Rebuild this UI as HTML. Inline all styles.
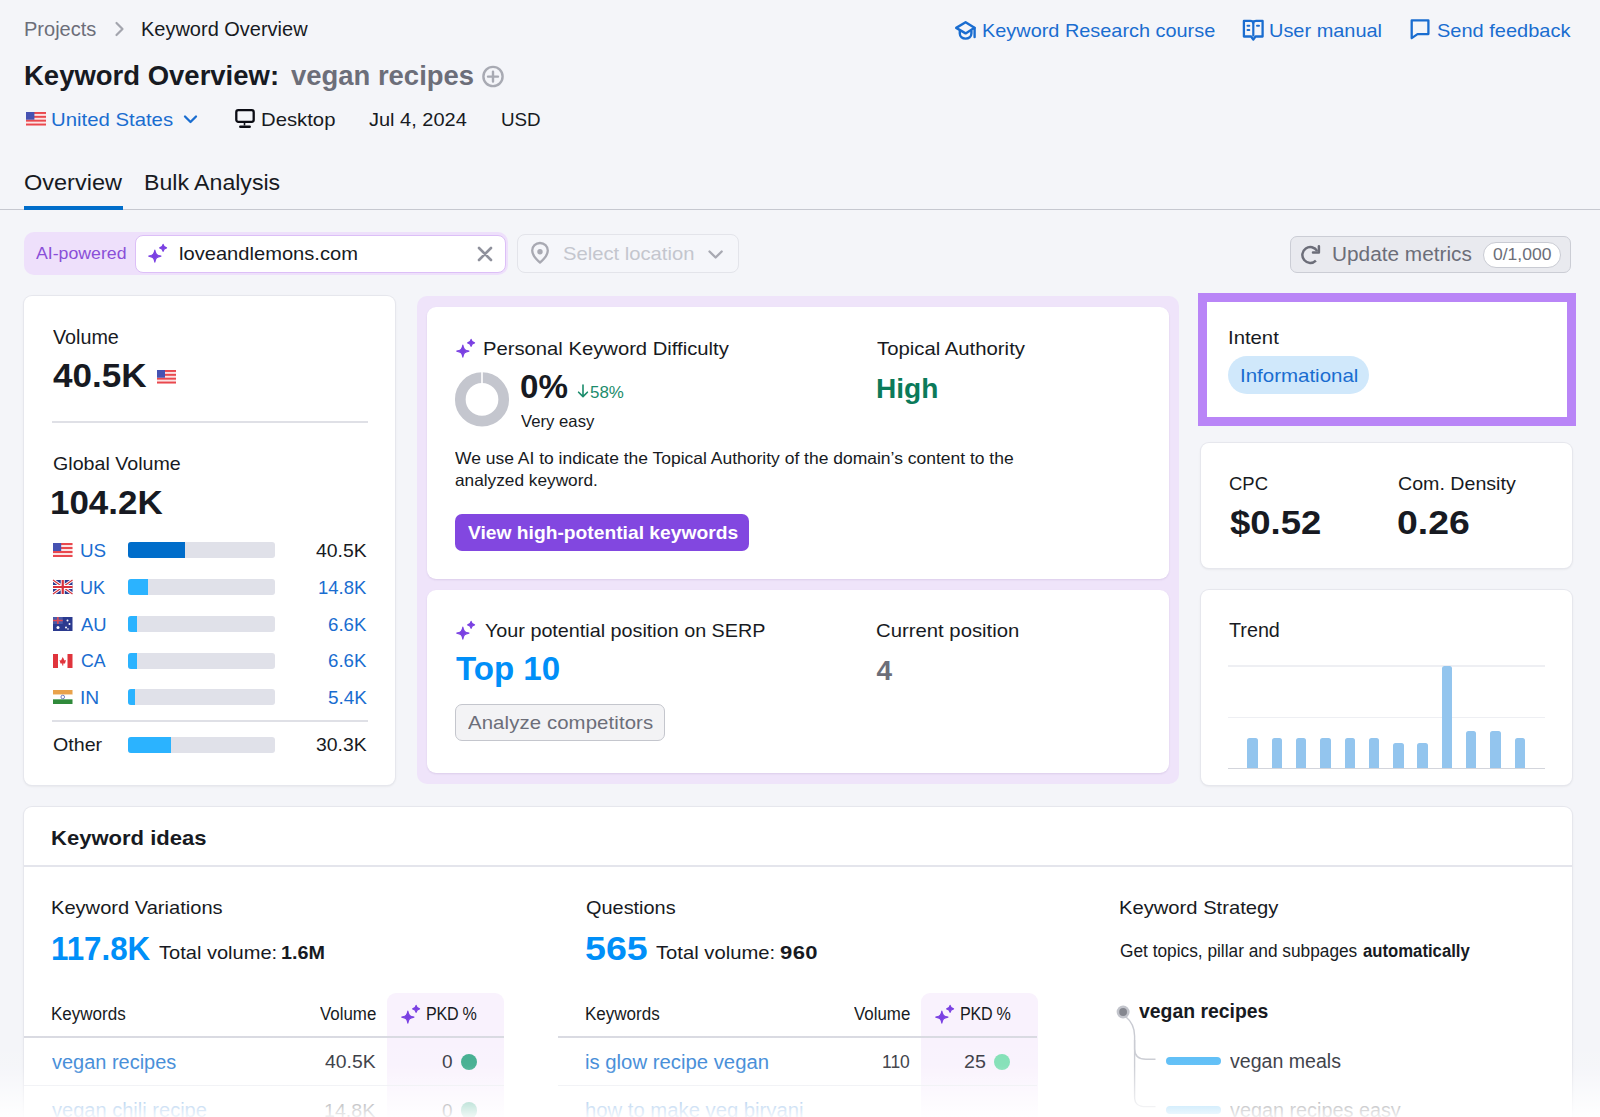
<!DOCTYPE html>
<html><head><meta charset="utf-8"><style>
html,body{margin:0;padding:0;}
body{width:1600px;height:1117px;overflow:hidden;background:#f4f5f9;position:relative;font-family:"Liberation Sans", sans-serif;}
.t{position:absolute;white-space:nowrap;font-family:"Liberation Sans", sans-serif;}
svg{overflow:visible}
</style></head><body>
<svg style="position:absolute;left:113px;top:20px;" width="14" height="18" viewBox="0 0 14 18"><path d="M3.5 3 L9.5 9 L3.5 15" fill="none" stroke="#a3a5ae" stroke-width="2.2" stroke-linecap="round" stroke-linejoin="round"/></svg>
<svg style="position:absolute;left:480px;top:64px;" width="26" height="26" viewBox="0 0 26 26"><circle cx="13" cy="12.5" r="9.6" fill="none" stroke="#a8aab3" stroke-width="2.4"/><path d="M13 7.6V17.6M8 12.6H18" stroke="#a8aab3" stroke-width="2.4" stroke-linecap="round"/></svg>
<svg style="position:absolute;left:25.5px;top:112.3px;" width="20" height="13.5" viewBox="0 0 20 13.5"><rect width="20" height="13.5" fill="#fbe3e4"/><rect x="0" y="0.00" width="20" height="1.93" fill="#e9484e"/><rect x="0" y="3.86" width="20" height="1.93" fill="#e9484e"/><rect x="0" y="7.71" width="20" height="1.93" fill="#e9484e"/><rect x="0" y="11.57" width="20" height="1.93" fill="#e9484e"/><rect width="8.40" height="7.71" fill="#4652b2"/></svg>
<svg style="position:absolute;left:182px;top:112px;" width="18" height="14" viewBox="0 0 18 14"><path d="M3 4.5 L8.5 10 L14 4.5" fill="none" stroke="#1a6dd0" stroke-width="2.3" stroke-linecap="round" stroke-linejoin="round"/></svg>
<svg style="position:absolute;left:234px;top:108px;" width="22" height="22" viewBox="0 0 22 22"><rect x="2.3" y="2.2" width="17.4" height="11.6" rx="2" fill="none" stroke="#0b0c14" stroke-width="2.3"/><path d="M10.5 14V17.5" stroke="#0b0c14" stroke-width="1.6"/><path d="M6.3 18.7H15.7" stroke="#0b0c14" stroke-width="2.4" stroke-linecap="round"/></svg>
<svg style="position:absolute;left:953px;top:18px;" width="26" height="22" viewBox="0 0 26 22"><path d="M3.2 9.9 L12.6 4.3 L21.5 9.8 L12.6 15.4 Z" fill="none" stroke="#1a6dd0" stroke-width="2.4" stroke-linejoin="round"/><path d="M6.8 12.6V15.6C6.8 18.8 9.4 20.6 12.6 20.6C15.8 20.6 18.4 18.8 18.4 15.6V12.6" fill="none" stroke="#1a6dd0" stroke-width="2.4"/><path d="M21.6 10V19" stroke="#1a6dd0" stroke-width="2.4" stroke-linecap="round"/></svg>
<svg style="position:absolute;left:1241px;top:18px;" width="26" height="24" viewBox="0 0 26 24"><path d="M2.9 2.9H9.3C10.8 2.9 12.2 3.6 12.3 5 C12.4 3.6 13.8 2.9 15.3 2.9H21.6V18.5H14.5L12.3 21.6L10.1 18.5H2.9Z" fill="none" stroke="#1a6dd0" stroke-width="2.3" stroke-linejoin="round"/><path d="M12.3 5V18.5" stroke="#1a6dd0" stroke-width="2.2"/><path d="M6.5 7.7H8.3M6.5 11.9H8.3M16 7.7H18" stroke="#1a6dd0" stroke-width="2" stroke-linecap="round"/></svg>
<svg style="position:absolute;left:1409px;top:18px;" width="24" height="24" viewBox="0 0 24 24"><path d="M2.7 2.4H19.4V16.1H8.5L2.7 20.1Z" fill="none" stroke="#1a6dd0" stroke-width="2.3" stroke-linejoin="round"/></svg>
<div style="position:absolute;left:0px;top:208.8px;width:1600px;height:1.5px;background:#c6c8d0"></div>
<div style="position:absolute;left:24px;top:206px;width:99px;height:4px;background:#006dca"></div>
<div style="position:absolute;left:24px;top:232px;width:484px;height:42.5px;background:#eee0fb;border-radius:10px"></div>
<div style="position:absolute;left:135px;top:234.5px;width:371px;height:38.0px;background:#fff;border:1.5px solid #dcbff7;border-radius:8px;box-sizing:border-box"></div>
<svg style="position:absolute;left:148.3px;top:244.2px;" width="20" height="20" viewBox="0 0 20 20"><g transform="scale(1.0)"><path d="M6.85 6.1 C7.58 10.30 8.68 11.38 12.95 12.1 C8.68 12.82 7.58 13.90 6.85 18.1 C6.12 13.90 5.02 12.82 0.75 12.1 C5.02 11.38 6.12 10.30 6.85 6.1Z" fill="#7a40e2" stroke="#7a40e2" stroke-width="1.1" stroke-linejoin="round"/><path d="M15.1 0.3500000000000001 C15.52 2.80 16.15 3.43 18.6 3.85 C16.15 4.27 15.52 4.90 15.1 7.35 C14.68 4.90 14.05 4.27 11.6 3.85 C14.05 3.43 14.68 2.80 15.1 0.3500000000000001Z" fill="#7a40e2" stroke="#7a40e2" stroke-width="1.1" stroke-linejoin="round"/></g></svg>
<svg style="position:absolute;left:474px;top:243px;" width="22" height="22" viewBox="0 0 22 22"><path d="M5 5L17 17M17 5L5 17" stroke="#8f919c" stroke-width="2.6" stroke-linecap="round"/></svg>
<div style="position:absolute;left:517.2px;top:234.3px;width:221.5px;height:38.39999999999998px;border:1.5px solid #e3e4ea;border-radius:8px;box-sizing:border-box;background:#f5f6fa"></div>
<svg style="position:absolute;left:528px;top:241px;" width="24" height="24" viewBox="0 0 24 24"><path d="M12 21.5C12 21.5 4.2 15.6 4.2 9.6C4.2 5.3 7.7 2 12 2C16.3 2 19.8 5.3 19.8 9.6C19.8 15.6 12 21.5 12 21.5Z" fill="none" stroke="#a8a9b2" stroke-width="2.3" stroke-linejoin="round"/><circle cx="12" cy="10.8" r="2.7" fill="#a8a9b2"/></svg>
<svg style="position:absolute;left:706px;top:246px;" width="20" height="16" viewBox="0 0 20 16"><path d="M3.5 5.5L9.6 11.5L15.7 5.5" fill="none" stroke="#a8a9b2" stroke-width="2.3" stroke-linecap="round" stroke-linejoin="round"/></svg>
<div style="position:absolute;left:1290px;top:236.4px;width:281.20000000000005px;height:36.599999999999994px;background:#e9eaef;border:1.3px solid #cbcdd5;border-radius:7px;box-sizing:border-box"></div>
<svg style="position:absolute;left:1299px;top:243px;" width="24" height="24" viewBox="0 0 24 24"><path d="M16.9 17.6A7.95 7.95 0 1 1 18.2 8.0" fill="none" stroke="#6c6e79" stroke-width="2.5"/><path d="M19.9 3.3V9.6H14" fill="none" stroke="#6c6e79" stroke-width="2.5" stroke-linejoin="round" stroke-linecap="round"/></svg>
<div style="position:absolute;left:1483.4px;top:241.6px;width:77.19999999999982px;height:26.00000000000003px;background:#fff;border:1.2px solid #c9cbd3;border-radius:14px;box-sizing:border-box"></div>
<div style="position:absolute;left:24px;top:296px;width:371px;height:489px;background:#fff;border-radius:8px;box-shadow:0 0 0 1px #e6e7ed,0 1px 3px rgba(0,0,0,0.10)"></div>
<svg style="position:absolute;left:156.5px;top:369.5px;" width="19" height="13.5" viewBox="0 0 19 13.5"><rect width="19" height="13.5" fill="#fbe3e4"/><rect x="0" y="0.00" width="19" height="1.93" fill="#e9484e"/><rect x="0" y="3.86" width="19" height="1.93" fill="#e9484e"/><rect x="0" y="7.71" width="19" height="1.93" fill="#e9484e"/><rect x="0" y="11.57" width="19" height="1.93" fill="#e9484e"/><rect width="7.98" height="7.71" fill="#4652b2"/></svg>
<div style="position:absolute;left:52px;top:421.3px;width:316px;height:2.0px;background:#dfe0e6"></div>
<svg style="position:absolute;left:53px;top:543.4000000000001px;" width="19.5" height="14" viewBox="0 0 19.5 14"><rect width="19.5" height="14" fill="#fbe3e4"/><rect x="0" y="0.00" width="19.5" height="2.00" fill="#e9484e"/><rect x="0" y="4.00" width="19.5" height="2.00" fill="#e9484e"/><rect x="0" y="8.00" width="19.5" height="2.00" fill="#e9484e"/><rect x="0" y="12.00" width="19.5" height="2.00" fill="#e9484e"/><rect width="8.19" height="8.00" fill="#4652b2"/></svg>
<div style="position:absolute;left:128px;top:542.2px;width:147px;height:16.0px;background:#e0e1e9;border-radius:3px"></div>
<div style="position:absolute;left:128px;top:542.2px;width:56.80000000000001px;height:16.0px;background:#006dca;border-radius:3px 0 0 3px"></div>
<svg style="position:absolute;left:53px;top:580.2px;" width="19.5" height="14" viewBox="0 0 19.5 14"><rect width="19.5" height="14" fill="#2b3a8f"/><path d="M0 0L19.5 14M19.5 0L0 14" stroke="#fff" stroke-width="3"/><path d="M0 0L19.5 14M19.5 0L0 14" stroke="#d8323c" stroke-width="1.2"/><path d="M9.75 0V14M0 7.0H19.5" stroke="#fff" stroke-width="4"/><path d="M9.75 0V14M0 7.0H19.5" stroke="#d8323c" stroke-width="2.2"/></svg>
<div style="position:absolute;left:128px;top:579.0px;width:147px;height:16.0px;background:#e0e1e9;border-radius:3px"></div>
<div style="position:absolute;left:128px;top:579.0px;width:20.0px;height:16.0px;background:#2bb3ff;border-radius:3px 0 0 3px"></div>
<svg style="position:absolute;left:53px;top:616.95px;" width="19.5" height="14" viewBox="0 0 19.5 14"><rect width="19.5" height="14" fill="#2b3a8f"/><rect width="9.75" height="7.0" fill="#4a5aa8"/><path d="M4.875 0V7.0M0 3.5H9.75" stroke="#e04a55" stroke-width="1.6"/><circle cx="5" cy="10.5" r="1.5" fill="#fff"/><circle cx="14.5" cy="3.5" r="1" fill="#fff"/><circle cx="16.5" cy="7" r="1" fill="#fff"/><circle cx="13" cy="10.5" r="1" fill="#fff"/><circle cx="15" cy="12" r="0.8" fill="#fff"/></svg>
<div style="position:absolute;left:128px;top:615.75px;width:147px;height:16.0px;background:#e0e1e9;border-radius:3px"></div>
<div style="position:absolute;left:128px;top:615.75px;width:9.0px;height:16.0px;background:#2bb3ff;border-radius:3px 0 0 3px"></div>
<svg style="position:absolute;left:53px;top:653.7px;" width="19.5" height="14" viewBox="0 0 19.5 14"><rect width="19.5" height="14" fill="#fff"/><rect width="5" height="14" fill="#e0343c"/><rect x="14.5" width="5" height="14" fill="#e0343c"/><path d="M9.75 3L11.5 6.5L13 6L12 9.5H10.3V11.5H9.2V9.5H7.5L6.5 6L8 6.5Z" fill="#e0343c"/></svg>
<div style="position:absolute;left:128px;top:652.5px;width:147px;height:16.0px;background:#e0e1e9;border-radius:3px"></div>
<div style="position:absolute;left:128px;top:652.5px;width:9.0px;height:16.0px;background:#2bb3ff;border-radius:3px 0 0 3px"></div>
<svg style="position:absolute;left:53px;top:690.2px;" width="19.5" height="14" viewBox="0 0 19.5 14"><rect width="19.5" height="4.67" fill="#e9a24b"/><rect y="4.67" width="19.5" height="4.67" fill="#fff"/><rect y="9.33" width="19.5" height="4.67" fill="#2f8a3a"/><circle cx="9.75" cy="7.0" r="1.8" fill="none" stroke="#5060b0" stroke-width="0.8"/></svg>
<div style="position:absolute;left:128px;top:689.0px;width:147px;height:16.0px;background:#e0e1e9;border-radius:3px"></div>
<div style="position:absolute;left:128px;top:689.0px;width:7.400000000000006px;height:16.0px;background:#2bb3ff;border-radius:3px 0 0 3px"></div>
<div style="position:absolute;left:52px;top:719.5px;width:316px;height:2.0px;background:#dfe0e6"></div>
<div style="position:absolute;left:128px;top:737px;width:147px;height:16px;background:#e0e1e9;border-radius:3px"></div>
<div style="position:absolute;left:128px;top:737px;width:42.599999999999994px;height:16px;background:#2bb3ff;border-radius:3px 0 0 3px"></div>
<div style="position:absolute;left:416.7px;top:296.25px;width:762.5999999999999px;height:488.04999999999995px;background:#efe4fa;border-radius:10px"></div>
<div style="position:absolute;left:426.8px;top:306.8px;width:742.4000000000001px;height:272.7px;background:#fff;border-radius:9px;box-shadow:0 1px 2px rgba(80,40,120,0.12)"></div>
<div style="position:absolute;left:426.8px;top:590.1px;width:742.4000000000001px;height:183.39999999999998px;background:#fff;border-radius:9px;box-shadow:0 1px 2px rgba(80,40,120,0.12)"></div>
<svg style="position:absolute;left:455.6px;top:338.8px;" width="20" height="20" viewBox="0 0 20 20"><g transform="scale(1.0)"><path d="M6.85 6.1 C7.58 10.30 8.68 11.38 12.95 12.1 C8.68 12.82 7.58 13.90 6.85 18.1 C6.12 13.90 5.02 12.82 0.75 12.1 C5.02 11.38 6.12 10.30 6.85 6.1Z" fill="#7a40e2" stroke="#7a40e2" stroke-width="1.1" stroke-linejoin="round"/><path d="M15.1 0.3500000000000001 C15.52 2.80 16.15 3.43 18.6 3.85 C16.15 4.27 15.52 4.90 15.1 7.35 C14.68 4.90 14.05 4.27 11.6 3.85 C14.05 3.43 14.68 2.80 15.1 0.3500000000000001Z" fill="#7a40e2" stroke="#7a40e2" stroke-width="1.1" stroke-linejoin="round"/></g></svg>
<svg style="position:absolute;left:450px;top:367px;" width="64" height="64" viewBox="0 0 64 64"><circle cx="32" cy="32.4" r="21.7" fill="none" stroke="#c4c6ce" stroke-width="10.7"/><rect x="31.2" y="5" width="1.6" height="12" fill="#fff"/></svg>
<svg style="position:absolute;left:576px;top:383px;" width="14" height="16" viewBox="0 0 14 16"><path d="M7 2V13.5M2.6 9.2L7 13.6L11.4 9.2" fill="none" stroke="#1b8c6c" stroke-width="1.6" stroke-linecap="round" stroke-linejoin="round"/></svg>
<div style="position:absolute;left:454.9px;top:513.8px;width:293.80000000000007px;height:37.60000000000002px;background:#8247e0;border-radius:7px"></div>
<svg style="position:absolute;left:456px;top:621px;" width="20" height="20" viewBox="0 0 20 20"><g transform="scale(1.0)"><path d="M6.85 6.1 C7.58 10.30 8.68 11.38 12.95 12.1 C8.68 12.82 7.58 13.90 6.85 18.1 C6.12 13.90 5.02 12.82 0.75 12.1 C5.02 11.38 6.12 10.30 6.85 6.1Z" fill="#7a40e2" stroke="#7a40e2" stroke-width="1.1" stroke-linejoin="round"/><path d="M15.1 0.3500000000000001 C15.52 2.80 16.15 3.43 18.6 3.85 C16.15 4.27 15.52 4.90 15.1 7.35 C14.68 4.90 14.05 4.27 11.6 3.85 C14.05 3.43 14.68 2.80 15.1 0.3500000000000001Z" fill="#7a40e2" stroke="#7a40e2" stroke-width="1.1" stroke-linejoin="round"/></g></svg>
<div style="position:absolute;left:454.9px;top:704.2px;width:209.89999999999998px;height:37.09999999999991px;background:#f3f3f5;border:1.3px solid #c4c6cd;border-radius:7px;box-sizing:border-box"></div>
<div style="position:absolute;left:1198px;top:293px;width:378.25px;height:132.75px;background:#fff;border:9px solid #b985f7;box-sizing:border-box"></div>
<div style="position:absolute;left:1228px;top:356.25px;width:141.25px;height:37.5px;background:#d0e8fb;border-radius:19px"></div>
<div style="position:absolute;left:1201.25px;top:443px;width:370.5px;height:124.5px;background:#fff;border-radius:8px;box-shadow:0 0 0 1px #e6e7ed,0 1px 3px rgba(0,0,0,0.10)"></div>
<div style="position:absolute;left:1201.25px;top:590px;width:370.5px;height:195px;background:#fff;border-radius:8px;box-shadow:0 0 0 1px #e6e7ed,0 1px 3px rgba(0,0,0,0.10)"></div>
<div style="position:absolute;left:1228px;top:665.25px;width:316.5px;height:1.25px;background:#eeeff3"></div>
<div style="position:absolute;left:1228px;top:716.5px;width:316.5px;height:1.25px;background:#eeeff3"></div>
<div style="position:absolute;left:1228px;top:767.5px;width:316.5px;height:1.5px;background:#d3d5dc"></div>
<div style="position:absolute;left:1247.25px;top:737.5px;width:10.25px;height:30.100000000000023px;background:#93c5ee;border-radius:2.5px 2.5px 0 0"></div>
<div style="position:absolute;left:1271.75px;top:737.5px;width:10.25px;height:30.100000000000023px;background:#93c5ee;border-radius:2.5px 2.5px 0 0"></div>
<div style="position:absolute;left:1296px;top:737.5px;width:10.25px;height:30.100000000000023px;background:#93c5ee;border-radius:2.5px 2.5px 0 0"></div>
<div style="position:absolute;left:1320.25px;top:737.5px;width:10.25px;height:30.100000000000023px;background:#93c5ee;border-radius:2.5px 2.5px 0 0"></div>
<div style="position:absolute;left:1344.75px;top:737.5px;width:10.25px;height:30.100000000000023px;background:#93c5ee;border-radius:2.5px 2.5px 0 0"></div>
<div style="position:absolute;left:1369px;top:737.5px;width:10.25px;height:30.100000000000023px;background:#93c5ee;border-radius:2.5px 2.5px 0 0"></div>
<div style="position:absolute;left:1393.25px;top:743.25px;width:10.25px;height:24.350000000000023px;background:#93c5ee;border-radius:2.5px 2.5px 0 0"></div>
<div style="position:absolute;left:1417.25px;top:743.25px;width:10.25px;height:24.350000000000023px;background:#93c5ee;border-radius:2.5px 2.5px 0 0"></div>
<div style="position:absolute;left:1441.75px;top:665.75px;width:10.25px;height:101.85000000000002px;background:#93c5ee;border-radius:2.5px 2.5px 0 0"></div>
<div style="position:absolute;left:1466px;top:731px;width:10.25px;height:36.60000000000002px;background:#93c5ee;border-radius:2.5px 2.5px 0 0"></div>
<div style="position:absolute;left:1490.25px;top:731px;width:10.25px;height:36.60000000000002px;background:#93c5ee;border-radius:2.5px 2.5px 0 0"></div>
<div style="position:absolute;left:1514.75px;top:737.5px;width:10.25px;height:30.100000000000023px;background:#93c5ee;border-radius:2.5px 2.5px 0 0"></div>
<div style="position:absolute;left:24.25px;top:806.75px;width:1547.25px;height:393.25px;background:#fff;border-radius:8px;box-shadow:0 0 0 1px #e6e7ed,0 1px 3px rgba(0,0,0,0.10)"></div>
<div style="position:absolute;left:24.25px;top:865.3px;width:1547.25px;height:2.0px;background:#e4e5ec"></div>
<div style="position:absolute;left:387.2px;top:993.1px;width:116.55000000000001px;height:206.89999999999998px;background:#f9f2fd;border-radius:9px 9px 0 0"></div>
<svg style="position:absolute;left:400.59999999999997px;top:1005.2px;" width="20" height="20" viewBox="0 0 20 20"><g transform="scale(1.0)"><path d="M6.85 6.1 C7.58 10.30 8.68 11.38 12.95 12.1 C8.68 12.82 7.58 13.90 6.85 18.1 C6.12 13.90 5.02 12.82 0.75 12.1 C5.02 11.38 6.12 10.30 6.85 6.1Z" fill="#7a40e2" stroke="#7a40e2" stroke-width="1.1" stroke-linejoin="round"/><path d="M15.1 0.3500000000000001 C15.52 2.80 16.15 3.43 18.6 3.85 C16.15 4.27 15.52 4.90 15.1 7.35 C14.68 4.90 14.05 4.27 11.6 3.85 C14.05 3.43 14.68 2.80 15.1 0.3500000000000001Z" fill="#7a40e2" stroke="#7a40e2" stroke-width="1.1" stroke-linejoin="round"/></g></svg>
<div style="position:absolute;left:24.25px;top:1035.9px;width:479.5px;height:2.0px;background:#d9dae2"></div>
<div style="position:absolute;left:24.25px;top:1085px;width:479.5px;height:1.2000000000000455px;background:#e9eaf0"></div>
<div style="position:absolute;left:460.59999999999997px;top:1053.75px;width:16.30000000000001px;height:16.25px;background:#3dab8c;border-radius:50%"></div>
<div style="position:absolute;left:460.59999999999997px;top:1102.45px;width:16.30000000000001px;height:16.25px;background:#3dab8c;border-radius:50%"></div>
<div style="position:absolute;left:921.25px;top:993.1px;width:116.25px;height:206.89999999999998px;background:#f9f2fd;border-radius:9px 9px 0 0"></div>
<svg style="position:absolute;left:934.65px;top:1005.2px;" width="20" height="20" viewBox="0 0 20 20"><g transform="scale(1.0)"><path d="M6.85 6.1 C7.58 10.30 8.68 11.38 12.95 12.1 C8.68 12.82 7.58 13.90 6.85 18.1 C6.12 13.90 5.02 12.82 0.75 12.1 C5.02 11.38 6.12 10.30 6.85 6.1Z" fill="#7a40e2" stroke="#7a40e2" stroke-width="1.1" stroke-linejoin="round"/><path d="M15.1 0.3500000000000001 C15.52 2.80 16.15 3.43 18.6 3.85 C16.15 4.27 15.52 4.90 15.1 7.35 C14.68 4.90 14.05 4.27 11.6 3.85 C14.05 3.43 14.68 2.80 15.1 0.3500000000000001Z" fill="#7a40e2" stroke="#7a40e2" stroke-width="1.1" stroke-linejoin="round"/></g></svg>
<div style="position:absolute;left:558.4px;top:1035.9px;width:479.1px;height:2.0px;background:#d9dae2"></div>
<div style="position:absolute;left:558.4px;top:1085px;width:479.1px;height:1.2000000000000455px;background:#e9eaf0"></div>
<div style="position:absolute;left:994.0px;top:1053.75px;width:16.299999999999955px;height:16.25px;background:#7edfb4;border-radius:50%"></div>
<svg style="position:absolute;left:1110px;top:1000px;" width="60" height="120" viewBox="0 0 60 120"><path d="M15.5 16.5 C21 21 24.6 27 24.6 36 V49 C24.6 56 28 59.25 36 59.25 H45.5" fill="none" stroke="#c9cbd2" stroke-width="1.4"/><path d="M24.6 40 V97 C24.6 104 28 106.6 36 106.6 H45.5" fill="none" stroke="#c9cbd2" stroke-width="1.4"/><circle cx="13.1" cy="12" r="6.5" fill="#c3c5cc"/><circle cx="13.1" cy="12" r="3.9" fill="#85878f"/></svg>
<div style="position:absolute;left:1166.25px;top:1056.75px;width:54.75px;height:8.25px;background:#58bcf6;border-radius:4px"></div>
<div style="position:absolute;left:1166.25px;top:1105.5px;width:54.75px;height:8.200000000000045px;background:#58bcf6;border-radius:4px"></div>
<div class="t" style="left:24.37px;top:19.69px;font-size:19.5px;line-height:19.5px;font-weight:400;color:#6c6e79;transform:scaleX(1.0260);transform-origin:0 0;">Projects</div>
<div class="t" style="left:140.68px;top:19.69px;font-size:19.5px;line-height:19.5px;font-weight:400;color:#171a22;transform:scaleX(1.0248);transform-origin:0 0;">Keyword Overview</div>
<div class="t" style="left:24.48px;top:63.39px;font-size:27px;line-height:27px;font-weight:700;color:#171a22;transform:scaleX(1.0178);transform-origin:0 0;">Keyword Overview:</div>
<div class="t" style="left:291.00px;top:63.39px;font-size:27px;line-height:27px;font-weight:700;color:#6c6e79;transform:scaleX(1.0163);transform-origin:0 0;">vegan recipes</div>
<div class="t" style="left:51.43px;top:109.67px;font-size:19px;line-height:19px;font-weight:400;color:#1a6dd0;transform:scaleX(1.0705);transform-origin:0 0;">United States</div>
<div class="t" style="left:260.68px;top:109.67px;font-size:19px;line-height:19px;font-weight:400;color:#171a22;transform:scaleX(1.0678);transform-origin:0 0;">Desktop</div>
<div class="t" style="left:369.25px;top:109.67px;font-size:19px;line-height:19px;font-weight:400;color:#171a22;transform:scaleX(1.0520);transform-origin:0 0;">Jul 4, 2024</div>
<div class="t" style="left:501.01px;top:109.67px;font-size:19px;line-height:19px;font-weight:400;color:#171a22;transform:scaleX(0.9897);transform-origin:0 0;">USD</div>
<div class="t" style="left:982.35px;top:20.52px;font-size:19px;line-height:19px;font-weight:400;color:#1a6dd0;transform:scaleX(1.0467);transform-origin:0 0;">Keyword Research course</div>
<div class="t" style="left:1269.45px;top:20.52px;font-size:19px;line-height:19px;font-weight:400;color:#1a6dd0;transform:scaleX(1.0494);transform-origin:0 0;">User manual</div>
<div class="t" style="left:1437.00px;top:20.52px;font-size:19px;line-height:19px;font-weight:400;color:#1a6dd0;transform:scaleX(1.0529);transform-origin:0 0;">Send feedback</div>
<div class="t" style="left:23.93px;top:171.78px;font-size:22px;line-height:22px;font-weight:400;color:#171a22;transform:scaleX(1.0683);transform-origin:0 0;">Overview</div>
<div class="t" style="left:143.95px;top:171.78px;font-size:22px;line-height:22px;font-weight:400;color:#171a22;transform:scaleX(1.0506);transform-origin:0 0;">Bulk Analysis</div>
<div class="t" style="left:35.60px;top:244.61px;font-size:17px;line-height:17px;font-weight:400;color:#8a4fd8;transform:scaleX(1.0407);transform-origin:0 0;">AI-powered</div>
<div class="t" style="left:178.94px;top:243.92px;font-size:19px;line-height:19px;font-weight:400;color:#171a22;transform:scaleX(1.0589);transform-origin:0 0;">loveandlemons.com</div>
<div class="t" style="left:562.50px;top:244.12px;font-size:19px;line-height:19px;font-weight:400;color:#c4c6ce;transform:scaleX(1.0634);transform-origin:0 0;">Select location</div>
<div class="t" style="left:1331.93px;top:245.09px;font-size:19.5px;line-height:19.5px;font-weight:400;color:#6c6e79;transform:scaleX(1.0661);transform-origin:0 0;">Update metrics</div>
<div class="t" style="left:1493.00px;top:246.21px;font-size:17px;line-height:17px;font-weight:400;color:#6c6e79;transform:scaleX(1.0308);transform-origin:0 0;">0/1,000</div>
<div class="t" style="left:52.50px;top:327.74px;font-size:19.5px;line-height:19.5px;font-weight:400;color:#171a22;transform:scaleX(1.0125);transform-origin:0 0;">Volume</div>
<div class="t" style="left:53.00px;top:358.22px;font-size:34px;line-height:34px;font-weight:700;color:#171a22;transform:scaleX(1.0310);transform-origin:0 0;">40.5K</div>
<div class="t" style="left:52.50px;top:453.92px;font-size:19px;line-height:19px;font-weight:400;color:#171a22;transform:scaleX(1.0333);transform-origin:0 0;">Global Volume</div>
<div class="t" style="left:50.44px;top:484.52px;font-size:34px;line-height:34px;font-weight:700;color:#171a22;transform:scaleX(1.0279);transform-origin:0 0;">104.2K</div>
<div class="t" style="left:80.11px;top:541.02px;font-size:19px;line-height:19px;font-weight:400;color:#1a6dd0;transform:scaleX(0.9911);transform-origin:0 0;">US</div>
<div class="t" style="left:316.00px;top:541.02px;font-size:19px;line-height:19px;font-weight:400;color:#171a22;transform:scaleX(1.0204);transform-origin:0 0;">40.5K</div>
<div class="t" style="left:80.15px;top:577.82px;font-size:19px;line-height:19px;font-weight:400;color:#1a6dd0;transform:scaleX(0.9525);transform-origin:0 0;">UK</div>
<div class="t" style="left:318.43px;top:577.82px;font-size:19px;line-height:19px;font-weight:400;color:#1a6dd0;transform:scaleX(0.9718);transform-origin:0 0;">14.8K</div>
<div class="t" style="left:81.10px;top:614.57px;font-size:19px;line-height:19px;font-weight:400;color:#1a6dd0;transform:scaleX(0.9699);transform-origin:0 0;">AU</div>
<div class="t" style="left:328.30px;top:614.57px;font-size:19px;line-height:19px;font-weight:400;color:#1a6dd0;transform:scaleX(0.9819);transform-origin:0 0;">6.6K</div>
<div class="t" style="left:81.10px;top:651.32px;font-size:19px;line-height:19px;font-weight:400;color:#1a6dd0;transform:scaleX(0.9318);transform-origin:0 0;">CA</div>
<div class="t" style="left:328.30px;top:651.32px;font-size:19px;line-height:19px;font-weight:400;color:#1a6dd0;transform:scaleX(0.9819);transform-origin:0 0;">6.6K</div>
<div class="t" style="left:80.09px;top:687.82px;font-size:19px;line-height:19px;font-weight:400;color:#1a6dd0;transform:scaleX(1.0128);transform-origin:0 0;">IN</div>
<div class="t" style="left:327.70px;top:687.82px;font-size:19px;line-height:19px;font-weight:400;color:#1a6dd0;transform:scaleX(0.9971);transform-origin:0 0;">5.4K</div>
<div class="t" style="left:52.50px;top:735.12px;font-size:19px;line-height:19px;font-weight:400;color:#171a22;transform:scaleX(1.0334);transform-origin:0 0;">Other</div>
<div class="t" style="left:316.00px;top:735.12px;font-size:19px;line-height:19px;font-weight:400;color:#171a22;transform:scaleX(1.0204);transform-origin:0 0;">30.3K</div>
<div class="t" style="left:482.69px;top:338.67px;font-size:19px;line-height:19px;font-weight:400;color:#171a22;transform:scaleX(1.0644);transform-origin:0 0;">Personal Keyword Difficulty</div>
<div class="t" style="left:519.89px;top:369.57px;font-size:33px;line-height:33px;font-weight:700;color:#171a22;transform:scaleX(1.0053);transform-origin:0 0;">0%</div>
<div class="t" style="left:589.50px;top:383.53px;font-size:16.5px;line-height:16.5px;font-weight:400;color:#1b8c6c;transform:scaleX(1.0254);transform-origin:0 0;">58%</div>
<div class="t" style="left:520.90px;top:413.23px;font-size:16.5px;line-height:16.5px;font-weight:400;color:#171a22;transform:scaleX(1.0122);transform-origin:0 0;">Very easy</div>
<div class="t" style="left:876.70px;top:338.67px;font-size:19px;line-height:19px;font-weight:400;color:#171a22;transform:scaleX(1.0693);transform-origin:0 0;">Topical Authority</div>
<div class="t" style="left:875.50px;top:374.90px;font-size:28px;line-height:28px;font-weight:700;color:#0b7a5a;transform:scaleX(1.0033);transform-origin:0 0;">High</div>
<div class="t" style="left:455.30px;top:450.33px;font-size:16.5px;line-height:16.5px;font-weight:400;color:#171a22;transform:scaleX(1.0592);transform-origin:0 0;">We use AI to indicate the Topical Authority of the domain’s content to the</div>
<div class="t" style="left:455.30px;top:472.13px;font-size:16.5px;line-height:16.5px;font-weight:400;color:#171a22;transform:scaleX(1.0450);transform-origin:0 0;">analyzed keyword.</div>
<div class="t" style="left:467.50px;top:522.92px;font-size:19px;line-height:19px;font-weight:700;color:#fff;transform:scaleX(1.0125);transform-origin:0 0;">View high-potential keywords</div>
<div class="t" style="left:484.60px;top:621.32px;font-size:19px;line-height:19px;font-weight:400;color:#171a22;transform:scaleX(1.0397);transform-origin:0 0;">Your potential position on SERP</div>
<div class="t" style="left:456.00px;top:652.17px;font-size:33px;line-height:33px;font-weight:700;color:#008ff8;transform:scaleX(1.0025);transform-origin:0 0;">Top 10</div>
<div class="t" style="left:468.00px;top:713.54px;font-size:18.5px;line-height:18.5px;font-weight:400;color:#6c6e79;letter-spacing:0.098px;transform:scaleX(1.1000);transform-origin:0 0;">Analyze competitors</div>
<div class="t" style="left:876.25px;top:620.82px;font-size:19px;line-height:19px;font-weight:400;color:#171a22;transform:scaleX(1.0688);transform-origin:0 0;">Current position</div>
<div class="t" style="left:876.60px;top:656.90px;font-size:28px;line-height:28px;font-weight:700;color:#6c6e79;">4</div>
<div class="t" style="left:1227.68px;top:328.17px;font-size:19px;line-height:19px;font-weight:400;color:#171a22;transform:scaleX(1.0686);transform-origin:0 0;">Intent</div>
<div class="t" style="left:1239.67px;top:365.92px;font-size:19px;line-height:19px;font-weight:400;color:#1a6dd0;transform:scaleX(1.0779);transform-origin:0 0;">Informational</div>
<div class="t" style="left:1229.25px;top:474.42px;font-size:19px;line-height:19px;font-weight:400;color:#171a22;transform:scaleX(0.9710);transform-origin:0 0;">CPC</div>
<div class="t" style="left:1229.50px;top:505.82px;font-size:33px;line-height:33px;font-weight:700;color:#171a22;transform:scaleX(1.1067);transform-origin:0 0;">$0.52</div>
<div class="t" style="left:1398.00px;top:474.42px;font-size:19px;line-height:19px;font-weight:400;color:#171a22;transform:scaleX(1.0325);transform-origin:0 0;">Com. Density</div>
<div class="t" style="left:1396.87px;top:505.82px;font-size:33px;line-height:33px;font-weight:700;color:#171a22;transform:scaleX(1.1332);transform-origin:0 0;">0.26</div>
<div class="t" style="left:1229.25px;top:620.99px;font-size:19.5px;line-height:19.5px;font-weight:400;color:#171a22;transform:scaleX(1.0127);transform-origin:0 0;">Trend</div>
<div class="t" style="left:51.45px;top:827.22px;font-size:21px;line-height:21px;font-weight:700;color:#171a22;transform:scaleX(1.0492);transform-origin:0 0;">Keyword ideas</div>
<div class="t" style="left:51.44px;top:898.02px;font-size:19px;line-height:19px;font-weight:400;color:#171a22;transform:scaleX(1.0574);transform-origin:0 0;">Keyword Variations</div>
<div class="t" style="left:51.10px;top:932.07px;font-size:33px;line-height:33px;font-weight:700;color:#008ff8;transform:scaleX(0.9488);transform-origin:0 0;">117.8K</div>
<div class="t" style="left:158.75px;top:943.42px;font-size:19px;line-height:19px;font-weight:400;color:#171a22;transform:scaleX(1.0550);transform-origin:0 0;">Total volume:</div>
<div class="t" style="left:281.46px;top:943.42px;font-size:19px;line-height:19px;font-weight:700;color:#171a22;transform:scaleX(1.0393);transform-origin:0 0;">1.6M</div>
<div class="t" style="left:585.90px;top:898.02px;font-size:19px;line-height:19px;font-weight:400;color:#171a22;transform:scaleX(1.0477);transform-origin:0 0;">Questions</div>
<div class="t" style="left:585.26px;top:932.07px;font-size:33px;line-height:33px;font-weight:700;color:#008ff8;transform:scaleX(1.1377);transform-origin:0 0;">565</div>
<div class="t" style="left:655.60px;top:943.42px;font-size:19px;line-height:19px;font-weight:400;color:#171a22;transform:scaleX(1.0645);transform-origin:0 0;">Total volume:</div>
<div class="t" style="left:779.70px;top:943.42px;font-size:19px;line-height:19px;font-weight:700;color:#171a22;letter-spacing:0.338px;transform:scaleX(1.1600);transform-origin:0 0;">960</div>
<div class="t" style="left:51.23px;top:1005.79px;font-size:17.5px;line-height:17.5px;font-weight:400;color:#171a22;transform:scaleX(0.9726);transform-origin:0 0;">Keywords</div>
<div class="t" style="left:320.00px;top:1005.79px;font-size:17.5px;line-height:17.5px;font-weight:400;color:#171a22;transform:scaleX(0.9646);transform-origin:0 0;">Volume</div>
<div class="t" style="left:425.98px;top:1005.79px;font-size:17.5px;line-height:17.5px;font-weight:400;color:#171a22;letter-spacing:-0.314px;transform:scaleX(0.9200);transform-origin:0 0;">PKD %</div>
<div class="t" style="left:52.20px;top:1051.57px;font-size:20px;line-height:20px;font-weight:400;color:#3a87d6;transform:scaleX(0.9982);transform-origin:0 0;">vegan recipes</div>
<div class="t" style="left:324.70px;top:1052.42px;font-size:19px;line-height:19px;font-weight:400;color:#33353d;transform:scaleX(1.0184);transform-origin:0 0;">40.5K</div>
<div class="t" style="left:441.90px;top:1052.42px;font-size:19px;line-height:19px;font-weight:400;color:#33353d;">0</div>
<div class="t" style="left:52.20px;top:1100.27px;font-size:20px;line-height:20px;font-weight:400;color:#3a87d6;transform:scaleX(1.0025);transform-origin:0 0;">vegan chili recipe</div>
<div class="t" style="left:323.97px;top:1101.12px;font-size:19px;line-height:19px;font-weight:400;color:#33353d;transform:scaleX(1.0331);transform-origin:0 0;">14.8K</div>
<div class="t" style="left:441.90px;top:1101.12px;font-size:19px;line-height:19px;font-weight:400;color:#33353d;">0</div>
<div class="t" style="left:584.93px;top:1005.79px;font-size:17.5px;line-height:17.5px;font-weight:400;color:#171a22;transform:scaleX(0.9726);transform-origin:0 0;">Keywords</div>
<div class="t" style="left:853.80px;top:1005.79px;font-size:17.5px;line-height:17.5px;font-weight:400;color:#171a22;transform:scaleX(0.9646);transform-origin:0 0;">Volume</div>
<div class="t" style="left:960.03px;top:1005.79px;font-size:17.5px;line-height:17.5px;font-weight:400;color:#171a22;letter-spacing:-0.314px;transform:scaleX(0.9200);transform-origin:0 0;">PKD %</div>
<div class="t" style="left:584.88px;top:1051.57px;font-size:20px;line-height:20px;font-weight:400;color:#3a87d6;transform:scaleX(1.0157);transform-origin:0 0;">is glow recipe vegan</div>
<div class="t" style="left:882.08px;top:1052.42px;font-size:19px;line-height:19px;font-weight:400;color:#33353d;letter-spacing:-0.014px;transform:scaleX(0.9200);transform-origin:0 0;">110</div>
<div class="t" style="left:964.00px;top:1052.42px;font-size:19px;line-height:19px;font-weight:400;color:#33353d;transform:scaleX(1.0356);transform-origin:0 0;">25</div>
<div class="t" style="left:584.89px;top:1100.27px;font-size:20px;line-height:20px;font-weight:400;color:#3a87d6;transform:scaleX(1.0134);transform-origin:0 0;">how to make veg biryani</div>
<div class="t" style="left:1118.94px;top:897.67px;font-size:19px;line-height:19px;font-weight:400;color:#171a22;transform:scaleX(1.0622);transform-origin:0 0;">Keyword Strategy</div>
<div class="t" style="left:1120.00px;top:943.19px;font-size:17.5px;line-height:17.5px;font-weight:400;color:#171a22;transform:scaleX(0.9874);transform-origin:0 0;">Get topics, pillar and subpages</div>
<div class="t" style="left:1362.50px;top:943.19px;font-size:17.5px;line-height:17.5px;font-weight:700;color:#171a22;transform:scaleX(0.9544);transform-origin:0 0;">automatically</div>
<div class="t" style="left:1138.75px;top:1000.57px;font-size:20px;line-height:20px;font-weight:700;color:#171a22;transform:scaleX(0.9697);transform-origin:0 0;">vegan recipes</div>
<div class="t" style="left:1230.00px;top:1051.79px;font-size:19.5px;line-height:19.5px;font-weight:400;color:#33353d;transform:scaleX(1.0039);transform-origin:0 0;">vegan meals</div>
<div class="t" style="left:1230.00px;top:1100.79px;font-size:19.5px;line-height:19.5px;font-weight:400;color:#33353d;transform:scaleX(1.0162);transform-origin:0 0;">vegan recipes easy</div>
<div style="position:absolute;left:0;top:1030px;width:1600px;height:87px;background:linear-gradient(to bottom,rgba(255,255,255,0) 0px,rgba(255,255,255,0.08) 36px,rgba(255,255,255,0.62) 68px,rgba(255,255,255,0.92) 87px);z-index:50"></div>
</body></html>
